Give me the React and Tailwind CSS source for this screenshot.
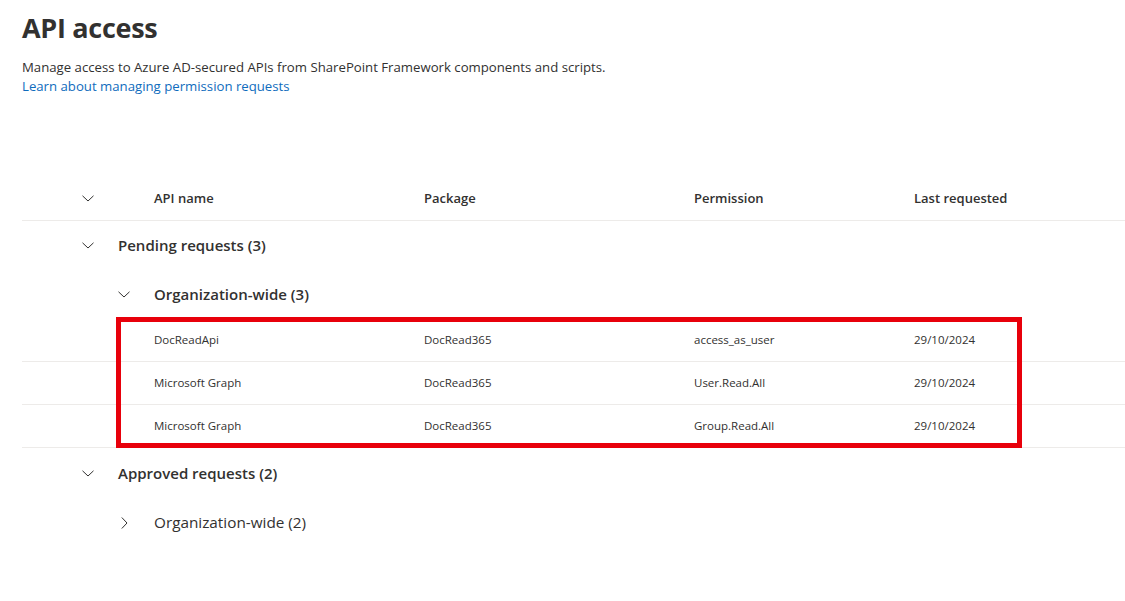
import React from 'react';

const font = { fontFamily: '"Open Sans", "Noto Sans", sans-serif' };

const rows = [
  { api: 'DocReadApi', pkg: 'DocRead365', perm: 'access_as_user', date: '29/10/2024' },
  { api: 'Microsoft Graph', pkg: 'DocRead365', perm: 'User.Read.All', date: '29/10/2024' },
  { api: 'Microsoft Graph', pkg: 'DocRead365', perm: 'Group.Read.All', date: '29/10/2024' },
];

function ChevronDown() {
  return (
    <svg width="12" height="7" viewBox="0 0 12 7" fill="none">
      <polyline points="0.5,0.8 6,6 11.5,0.8" stroke="#323130" strokeWidth="1" />
    </svg>
  );
}

function ChevronRight() {
  return (
    <svg width="7" height="12" viewBox="0 0 7 12" fill="none">
      <polyline points="0.8,0.5 6,6 0.8,11.5" stroke="#323130" strokeWidth="1" />
    </svg>
  );
}

export default function App() {
  return (
    <div className="relative w-[1125px] h-[601px] bg-white text-[#323130] overflow-hidden" style={font}>
      <div className="pl-[22px]">
        {/* heading */}
        <div className="pt-[9px]">
          <h1 className="text-[27px] leading-[38px] font-bold tracking-[-0.3px]">API access</h1>
          <p className="mt-[11px] text-[13.2px] leading-[19px]">
            Manage access to Azure AD-secured APIs from SharePoint Framework components and scripts.
          </p>
          <a className="block text-[13.2px] leading-[19px] text-[#0f6cbd]">Learn about managing permission requests</a>
        </div>

        {/* table */}
        <div className="mt-[81px]">
          <div className="flex items-center h-[44px] border-b border-[#edebe9] text-[13px] font-semibold">
            <div className="w-[132px] flex pl-[60px]"><ChevronDown /></div>
            <div className="w-[270px]">API name</div>
            <div className="w-[270px]">Package</div>
            <div className="w-[220px]">Permission</div>
            <div>Last requested</div>
          </div>

          <div className="flex items-center h-[49px] text-[15px] font-semibold">
            <div className="w-[96px] flex pl-[60px]"><ChevronDown /></div>
            <div>Pending requests (3)</div>
          </div>

          <div className="flex items-center h-[49px] text-[15px] font-semibold">
            <div className="w-[132px] flex pl-[96px]"><ChevronDown /></div>
            <div>Organization-wide (3)</div>
          </div>

          {rows.map((r, i) => (
            <div key={i} className="flex items-center h-[43px] border-b border-[#edebe9] text-[11.5px]">
              <div className="w-[132px]" />
              <div className="w-[270px]">{r.api}</div>
              <div className="w-[270px]">{r.pkg}</div>
              <div className="w-[220px]">{r.perm}</div>
              <div>{r.date}</div>
            </div>
          ))}

          <div className="flex items-center h-[50px] text-[15px] font-semibold">
            <div className="w-[96px] flex pl-[60px]"><ChevronDown /></div>
            <div>Approved requests (2)</div>
          </div>

          <div className="flex items-center h-[49px] text-[15.3px]">
            <div className="w-[132px] flex pl-[99px]"><ChevronRight /></div>
            <div>Organization-wide (2)</div>
          </div>
        </div>
      </div>

      {/* annotation box */}
      <div className="absolute left-[116px] top-[317px] w-[906px] h-[131px] border-[5px] border-[#e8000b] pointer-events-none" />
    </div>
  );
}
